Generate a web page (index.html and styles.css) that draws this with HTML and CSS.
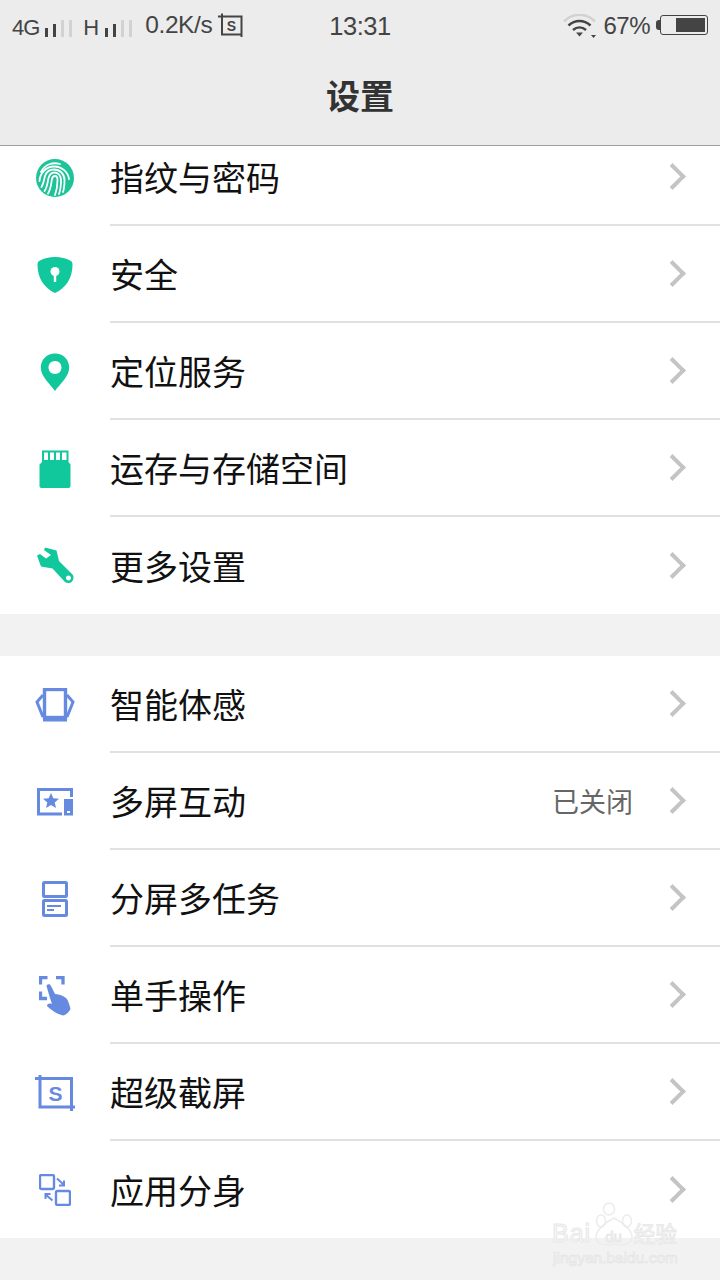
FILE: index.html
```
<!DOCTYPE html>
<html lang="zh-CN">
<head>
<meta charset="utf-8">
<title>设置</title>
<link rel="stylesheet" href="styles.css">
</head>
<body>
<div class="screen">
  <header class="top">
    <div class="status">
      <div class="st-left">
        <span class="net">4G</span>
        <span class="bars"><i class="on b1"></i><i class="on b2"></i><i class="b3"></i><i class="b3"></i></span>
        <span class="net net-h">H</span>
        <span class="bars"><i class="on b1"></i><i class="on b2"></i><i class="b3"></i><i class="b3"></i></span>
        <span class="speed">0.2K/s</span>
        <svg class="shot" width="26" height="26" viewBox="0 0 26 26"><path d="M2 4.500H23.500V22.500H4V1.500M0 4.500H4M23.500 22.500V25" fill="none" stroke="#444" stroke-width="2"/><text x="13.500" y="18.500" text-anchor="middle" class="shot-s">S</text></svg>
      </div>
      <div class="clock">13:31</div>
      <div class="st-right">
        <svg class="wifi" width="34" height="24" viewBox="0 0 34 24"><path d="M1 7.500C10 -1.500 23 -1.500 32 7.500" fill="none" stroke="#d2d2d2" stroke-width="2.500"/><path d="M5.500 11.500C12 5.500 21 5.500 27.500 11.500" fill="none" stroke="#444" stroke-width="2.500"/><path d="M10 16C14 12.500 19 12.500 23 16" fill="none" stroke="#444" stroke-width="2.500"/><path d="M13 18.500H20L16.500 22.500Z" fill="#444"/><path d="M28 21H33L30.500 24Z" fill="#444"/></svg>
        <span class="pct">67%</span>
        <span class="nub"></span>
        <span class="batt"><span class="fill"></span></span>
      </div>
    </div>
    <h1 class="title">设置</h1>
  </header>

  <main class="list">
    <section class="group first">
      <div class="row">
        <div class="ico"><svg width="38" height="38" viewBox="0 0 38 38"><circle cx="19" cy="19" r="19" fill="#1cc497"/><g fill="none" stroke="#fff" stroke-width="1.800" stroke-linecap="round"><path d="M5 13C9 5 17 3 24 5"/><path d="M3.500 22C4 14 10 7.500 18 7.500C26 7.500 32 13 33 20"/><path d="M5.500 28C8 24 8 20 9 17C10.500 12.500 14 10.500 18 10.500C24 10.500 28.500 15 28.500 21C28.500 25 28.500 29 27 33"/><path d="M8.500 32C11.500 28 11.500 23 12.500 19C13.500 15.500 15.500 13.500 18.500 13.500C22.500 13.500 25 17 25 21C25 26 24.500 31 23 35"/><path d="M12 34.500C15 30 15 25 16 20C16.500 17.500 18 17 19 17C21 17 21.500 19 21.500 21C21.500 27 20.500 32 19 36"/></g></svg></div>
        <div class="cell"><span class="label">指纹与密码</span><span class="chev"></span></div>
      </div>
      <div class="row">
        <div class="ico"><svg width="36" height="38" viewBox="0 0 36 38"><path d="M18 1C24 1 29 2.500 33 4.500C35 5.500 35.500 6.500 35.500 8.500C35.500 22 29 32 18 37C7 32 .5 22 .5 8.500C.5 6.500 1 5.500 3 4.500C7 2.500 12 1 18 1Z" fill="#10c89b"/><circle cx="18" cy="15.500" r="4.500" fill="#fff"/><rect x="16.800" y="17" width="2.400" height="9" fill="#fff"/></svg></div>
        <div class="cell"><span class="label">安全</span><span class="chev"></span></div>
      </div>
      <div class="row">
        <div class="ico"><svg width="30" height="38" viewBox="0 0 30 38"><path fill-rule="evenodd" d="M15 38C10 31 .8 23.500 .8 14.500C.8 6.500 7 .4 15 .4C23 .4 29.200 6.500 29.200 14.500C29.200 23.500 20 31 15 38ZM15 8C11.300 8 8.500 10.800 8.500 14.500C8.500 18.200 11.300 21 15 21C18.700 21 21.500 18.200 21.500 14.500C21.500 10.800 18.700 8 15 8Z" fill="#10c89b"/></svg></div>
        <div class="cell"><span class="label">定位服务</span><span class="chev"></span></div>
      </div>
      <div class="row">
        <div class="ico"><svg width="32" height="38" viewBox="0 0 32 38"><path fill-rule="evenodd" d="M3 .5H29.500V12L31.500 14.500V36C31.500 37 30.500 38 29.500 38H2.500C1.500 38 .5 37 .5 36V14.500L3 12ZM5 2.500V10H9V2.500ZM11 2.500V10H15V2.500ZM17 2.500V10H21V2.500ZM23 2.500V10H27.500V2.500Z" fill="#10c89b"/></svg></div>
        <div class="cell"><span class="label">运存与存储空间</span><span class="chev"></span></div>
      </div>
      <div class="row last">
        <div class="ico"><svg width="38" height="38" viewBox="0 0 38 38"><path fill-rule="evenodd" d="M9 .5L20.500 3.500L23 14L36.500 27.500C38 29 38 32.500 36 34.500C34 36.500 31 36.500 29 35L16.500 21.500L5 19.500L1 8.500L4 7L10 11.500L15 8L8 3ZM32.500 28.500C31 28.500 30 29.500 30 31C30 32.500 31 33.500 32.500 33.500C34 33.500 35 32.500 35 31C35 29.500 34 28.500 32.500 28.500Z" fill="#10c89b"/></svg></div>
        <div class="cell"><span class="label">更多设置</span><span class="chev"></span></div>
      </div>
    </section>

    <section class="group">
      <div class="row">
        <div class="ico"><svg width="40" height="34" viewBox="0 0 40 34"><rect x="9.500" y="1.500" width="21" height="28" fill="none" stroke="#658ae0" stroke-width="3.400"/><rect x="8" y="29" width="24" height="4.500" fill="#658ae0"/><path d="M8 7L2 14L8 29M32 7L38 14L32 29" fill="none" stroke="#658ae0" stroke-width="3"/></svg></div>
        <div class="cell"><span class="label">智能体感</span><span class="chev"></span></div>
      </div>
      <div class="row">
        <div class="ico"><svg width="36" height="28" viewBox="0 0 36 28"><path d="M1.500 0V26H25M0 1.500H34.500V9" fill="none" stroke="#658ae0" stroke-width="3"/><path d="M14 5L16.300 10.200L22 10.800L17.700 14.500L19 20L14 17.100L9 20L10.300 14.500L6 10.800L11.700 10.200Z" fill="#658ae0"/><path fill-rule="evenodd" d="M27 11H36V27.500H27ZM30 23V25H33V23Z" fill="#658ae0"/></svg></div>
        <div class="cell"><span class="label">多屏互动</span><span class="value">已关闭</span><span class="chev"></span></div>
      </div>
      <div class="row">
        <div class="ico"><svg width="26" height="36" viewBox="0 0 26 36"><rect x="1.500" y="1.500" width="23" height="14" rx="1" fill="none" stroke="#658ae0" stroke-width="3"/><rect x="1.500" y="19.500" width="23" height="15" rx="1" fill="none" stroke="#658ae0" stroke-width="3"/><rect x="5" y="24" width="14" height="2" fill="#658ae0"/><rect x="5" y="28" width="7" height="2" fill="#658ae0"/></svg></div>
        <div class="cell"><span class="label">分屏多任务</span><span class="chev"></span></div>
      </div>
      <div class="row">
        <div class="ico"><svg width="32" height="40" viewBox="0 0 32 40"><path d="M8.500 1.500H1.500V8.500M17 1.500H24V8.500M1.500 15.500V22.500H8" fill="none" stroke="#658ae0" stroke-width="3.300"/><path d="M7.500 10C8 8 11 7.500 12 10L16 18C20 18.500 27 20 29 25C30 28 31 30 31.500 33C30 36 27 39 24 39.500C18 38 12 34 8 30C8 28 10 27 13 28L11 22Z" fill="#658ae0"/></svg></div>
        <div class="cell"><span class="label">单手操作</span><span class="chev"></span></div>
      </div>
      <div class="row">
        <div class="ico"><svg width="40" height="36" viewBox="0 0 40 36"><path d="M0 3.500H36.500V36M5 0V32H40" fill="none" stroke="#658ae0" stroke-width="3"/><text x="20.500" y="25.500" text-anchor="middle" class="crop-s">S</text></svg></div>
        <div class="cell"><span class="label">超级截屏</span><span class="chev"></span></div>
      </div>
      <div class="row last">
        <div class="ico"><svg width="32" height="32" viewBox="0 0 32 32"><rect x="1" y="1" width="14" height="14" rx="1.500" fill="none" stroke="#658ae0" stroke-width="2.400"/><rect x="17" y="17" width="14" height="14" rx="1.500" fill="none" stroke="#658ae0" stroke-width="2.400"/><path d="M18 4.500L25 11M25 6.500V11.500H20" fill="none" stroke="#658ae0" stroke-width="2"/><path d="M13.500 26.500L6.500 20.500M6.500 25V20H11.500" fill="none" stroke="#658ae0" stroke-width="2"/></svg></div>
        <div class="cell"><span class="label">应用分身</span><span class="chev"></span></div>
      </div>
    </section>
  </main>

  <div class="mark">
    <svg class="paw" width="40" height="44" viewBox="0 0 40 44"><g fill="none" stroke="#ececec" stroke-width="1.500"><ellipse cx="15" cy="7" rx="5.500" ry="6"/><ellipse cx="7" cy="19" rx="4.500" ry="6"/><ellipse cx="33" cy="19" rx="4.500" ry="6"/><path d="M20 16C12 20 2 28 2 35C2 43 12 44 20 42C28 44 38 43 38 35C38 28 28 20 20 16Z"/></g></svg>
    <div class="mark-top"><span class="bai">Bai</span><span class="du">du</span><span class="jy">经验</span></div>
    <div class="mark-url">jingyan.baidu.com</div>
  </div>
</div>
</body>
</html>
```

FILE: styles.css
```
* { box-sizing: border-box; }
html, body { margin: 0; padding: 0; }
body {
  width: 720px;
  height: 1280px;
  overflow: hidden;
  font-family: "Liberation Sans", "Noto Sans CJK SC", sans-serif;
}
.screen {
  position: relative;
  width: 720px;
  height: 1280px;
  background: #f2f2f2;
  overflow: hidden;
}

/* header */
.top {
  height: 146px;
  background: #ececec;
  border-bottom: 1px solid #9e9e9e;
}
.status {
  height: 52px;
  display: grid;
  grid-template-columns: 1fr auto 1fr;
  align-items: center;
  color: #444;
}
.st-left {
  display: flex;
  align-items: center;
  padding-left: 12px;
}
.net { font-size: 22px; letter-spacing: -1px; margin-top: 4px; }
.net-h { margin-left: 11px; letter-spacing: 0; }
.bars {
  display: flex;
  align-items: flex-end;
  gap: 5px;
  height: 17px;
  margin-left: 6px;
  margin-top: 4px;
}
.bars i { display: block; width: 3px; background: #d2d2d2; }
.bars i.on { background: #444; }
.b1 { height: 9px; }
.b2 { height: 13px; }
.b3 { height: 17px; }
.speed { font-size: 24.5px; letter-spacing: -.4px; margin-left: 13px; margin-top: -2px; }
.shot { margin-left: 6px; margin-top: -2px; }
.shot-s { font-size: 14px; font-weight: 700; fill: #444; font-family: "Liberation Sans", sans-serif; }
.clock { font-size: 25.500px; letter-spacing: -.5px; }
.st-right {
  display: flex;
  align-items: center;
  justify-content: flex-end;
  padding-right: 12px;
}
.wifi { margin-right: 6px; }
.pct { font-size: 24px; letter-spacing: -.5px; margin-top: -1px; }
.nub { width: 4px; height: 10px; background: #444; border-radius: 3px 0 0 3px; margin-left: 6px; margin-top: -3px; }
.batt {
  display: flex;
  justify-content: flex-end;
  width: 48px;
  height: 20px;
  padding: 2px;
  margin-top: -3px;
  border: 1px solid #444;
  border-radius: 3px;
}
.fill { display: block; width: 29px; height: 14px; background: #444; }
.title {
  margin: 0;
  font-size: 34px;
  line-height: 40px;
  font-weight: 700;
  text-align: center;
  color: #333;
  padding-top: 25px;
}

/* list */
.list {
  height: 1092px;
  overflow: hidden;
}
.group { background: #fff; margin-bottom: 42px; }
.group.first { margin-top: -17px; }
.row {
  display: flex;
  height: 97px;
}
.ico {
  flex: 0 0 110px;
  display: flex;
  align-items: center;
  justify-content: center;
}
.cell {
  flex: 1;
  display: flex;
  align-items: center;
  border-bottom: 2px solid #e1e1e1;
  padding-right: 36px;
}
.last .cell { border-bottom: 0; }
.label { font-size: 34px; color: #111; flex: 1; }
.value { font-size: 27px; color: #666; margin-right: 30px; }
.chev {
  display: block;
  width: 19px;
  height: 19px;
  margin-right: 2px;
  border-top: 4px solid #c4c4c4;
  border-right: 4px solid #c4c4c4;
  transform: rotate(45deg);
}
.crop-s { font-size: 21px; font-weight: 700; fill: #658ae0; font-family: "Liberation Sans", sans-serif; }

/* watermark */
.mark {
  position: absolute;
  left: 552px;
  top: 1202px;
  width: 140px;
  height: 78px;
}
.paw { position: absolute; left: 42px; top: 0; }
.mark-top {
  position: absolute;
  left: 0;
  top: 15px;
  display: flex;
  align-items: baseline;
  white-space: nowrap;
  color: #f8f8f8;
  -webkit-text-stroke: 1px #e8e8e8;
}
.bai { font-size: 25px; letter-spacing: 1px; }
.du { font-size: 15px; margin-left: 14px; }
.jy { font-size: 21.500px; margin-left: 12px; }
.mark-url {
  position: absolute;
  left: 1px;
  top: 47px;
  font-size: 15.500px;
  white-space: nowrap;
  color: #f7f7f7;
  -webkit-text-stroke: .7px #e3e3e3;
}
```
